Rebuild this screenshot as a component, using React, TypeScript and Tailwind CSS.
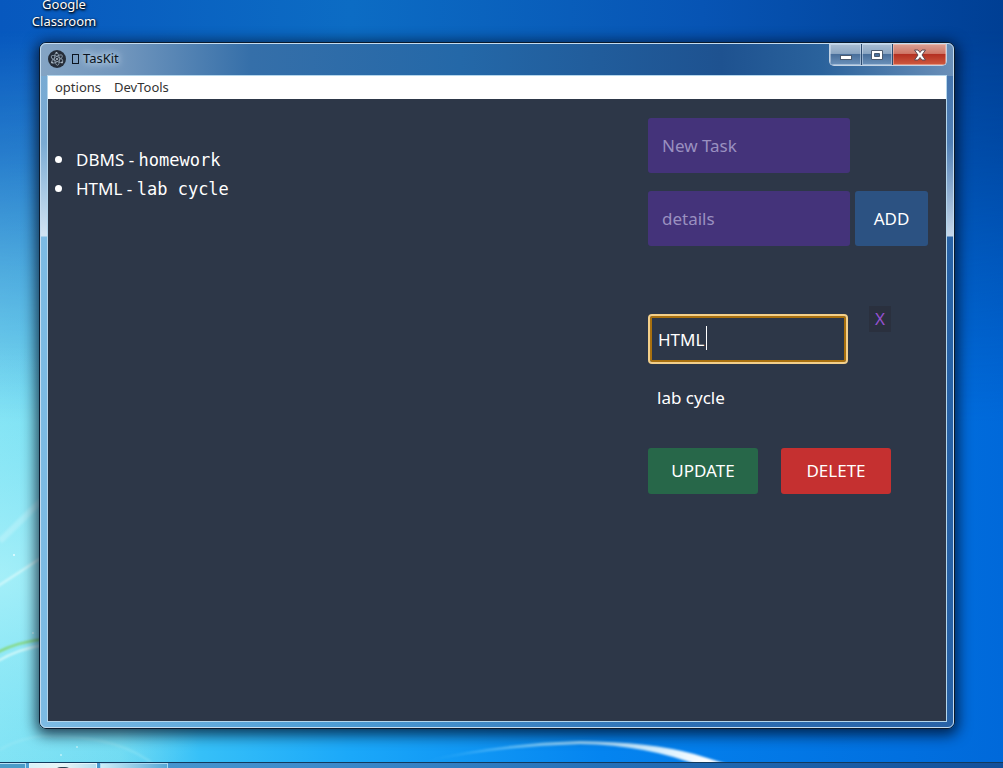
import { useState } from "react";

const tasks = [
  { name: "DBMS", details: "homework" },
  { name: "HTML", details: "lab cycle" },
];

function Wallpaper() {
  return (
    <svg
      className="absolute inset-0 h-full w-full"
      viewBox="0 0 1003 768"
      preserveAspectRatio="none"
      aria-hidden="true"
    >
      <defs>
        <linearGradient id="sky" x1="0" y1="0" x2="1" y2="0">
          <stop offset="0" stopColor="#0758be" />
          <stop offset="0.35" stopColor="#0c6cc4" />
          <stop offset="0.7" stopColor="#0754b4" />
          <stop offset="1" stopColor="#003f94" />
        </linearGradient>
        <linearGradient id="floor" x1="0" y1="0" x2="1" y2="0">
          <stop offset="0" stopColor="#7fe2f4" />
          <stop offset="0.12" stopColor="#6fdaf2" />
          <stop offset="0.2" stopColor="#36c0f8" />
          <stop offset="0.35" stopColor="#1ba8f9" />
          <stop offset="0.6" stopColor="#0484f0" />
          <stop offset="1" stopColor="#0069da" />
        </linearGradient>
        <linearGradient id="fade" x1="0" y1="0" x2="0" y2="1">
          <stop offset="0.04" stopColor="#000" />
          <stop offset="0.2" stopColor="#444" />
          <stop offset="0.35" stopColor="#999" />
          <stop offset="0.55" stopColor="#fff" />
        </linearGradient>
        <mask id="fadeMask">
          <rect width="1003" height="768" fill="url(#fade)" />
        </mask>
        <radialGradient id="glow" cx="0" cy="0.75" r="0.3">
          <stop offset="0" stopColor="#b8f6fb" stopOpacity="0.65" />
          <stop offset="1" stopColor="#8deaf8" stopOpacity="0" />
        </radialGradient>
        <linearGradient id="arc" x1="420" y1="0" x2="740" y2="0" gradientUnits="userSpaceOnUse">
          <stop offset="0" stopColor="#7fd8ff" stopOpacity="0" />
          <stop offset="0.4" stopColor="#a8e2ff" stopOpacity="0.8" />
          <stop offset="0.9" stopColor="#fff" />
          <stop offset="1" stopColor="#fff" stopOpacity="0.8" />
        </linearGradient>
        <filter id="soft" x="-10%" y="-50%" width="120%" height="200%">
          <feGaussianBlur stdDeviation="0.8" />
        </filter>
      </defs>
      <rect width="1003" height="768" fill="url(#sky)" />
      <rect width="1003" height="768" fill="url(#floor)" mask="url(#fadeMask)" />
      <rect width="1003" height="768" fill="url(#glow)" />
      <g fill="none" filter="url(#soft)">
        <path d="M0 541 L42 500" stroke="#fff" strokeOpacity="0.2" strokeWidth="6" />
        <path d="M-2 586 Q20 572 44 556" stroke="#e2fcfc" strokeOpacity="0.85" strokeWidth="2" />
        <path d="M-2 652 Q18 642 44 639" stroke="#84d66c" strokeWidth="2" />
        <path d="M-2 661 Q18 649 44 645" stroke="#d8fafa" strokeWidth="2" />
        <path d="M0 750 Q14 740 42 736 Q120 734 158 768" stroke="#a5ecf6" strokeOpacity="0.4" strokeWidth="2" />
      </g>
      <path
        d="M420 762 Q500 743 580 741 Q650 742 694 754 L740 768 L705 768 Q650 745 580 744 Q500 746 420 762Z"
        fill="url(#arc)"
        filter="url(#soft)"
      />
      <g fill="#e8fdff">
        <circle cx="14" cy="555" r="1" />
        <circle cx="77" cy="747" r="1" opacity="0.6" />
        <circle cx="61" cy="755" r="1" opacity="0.6" />
        <circle cx="33" cy="633" r="1" opacity="0.6" />
      </g>
    </svg>
  );
}

function AppIcon() {
  return (
    <svg className="h-[18px] w-[18px] shrink-0" viewBox="0 0 18 18" aria-hidden="true">
      <circle cx="9" cy="9" r="9" fill="#252d39" />
      <g fill="none" stroke="#8d9cab" strokeWidth="0.9">
        <ellipse cx="9" cy="9" rx="6.3" ry="2.4" transform="rotate(25 9 9)" />
        <ellipse cx="9" cy="9" rx="6.3" ry="2.4" transform="rotate(85 9 9)" />
        <ellipse cx="9" cy="9" rx="6.3" ry="2.4" transform="rotate(145 9 9)" />
      </g>
      <circle cx="9" cy="9" r="1" fill="#b4c0cc" />
      <circle cx="4" cy="12.4" r="0.9" fill="#b4c0cc" />
      <circle cx="14" cy="12.4" r="0.9" fill="#b4c0cc" />
      <circle cx="8.5" cy="2.8" r="0.9" fill="#b4c0cc" />
    </svg>
  );
}

function WindowButtons() {
  const glass =
    "flex items-center justify-center bg-[linear-gradient(to_bottom,#a9bdd3_0%,#8ba6c3_45%,#496f9b_50%,#6b91ba_100%)] shadow-[inset_0_0_0_1px_rgba(215,230,245,0.5)]";
  return (
    <div className="flex h-[22px] overflow-hidden rounded-b-[5px] border border-t-0 border-[#c3d3e4]">
      <button type="button" aria-label="Minimize" className={`${glass} w-8 border-r border-[#2c4b70]`}>
        <svg width="14" height="14" viewBox="0 0 14 14" aria-hidden="true">
          <rect x="1.5" y="7.5" width="11" height="4" fill="#fff" stroke="#4b5b70" />
        </svg>
      </button>
      <button type="button" aria-label="Maximize" className={`${glass} w-[31px] border-r border-[#2c4b70]`}>
        <svg width="14" height="12" viewBox="0 0 14 12" aria-hidden="true">
          <path
            d="M1.5 1.5H12.5V10.5H1.5Z M4.5 4.5V7.5H9.5V4.5Z"
            fill="#fff"
            fillRule="evenodd"
            stroke="#4b5b70"
          />
        </svg>
      </button>
      <button
        type="button"
        aria-label="Close"
        className="flex w-[53px] items-center justify-center bg-[linear-gradient(to_bottom,#dca195_0%,#cf7768_45%,#b43022_50%,#cf5a3f_100%)] shadow-[inset_0_0_0_1px_rgba(255,215,205,0.45)]"
      >
        <svg width="14" height="12" viewBox="0 0 14 12" aria-hidden="true">
          <path
            d="M1.5 1H5L7 3.5L9 1H12.5L9 6L12.5 11H9L7 8.5L5 11H1.5L5 6Z"
            fill="#fff"
            stroke="#5c4750"
          />
        </svg>
      </button>
    </div>
  );
}

function TitleBar() {
  return (
    <header className="flex h-[31px] items-start justify-between">
      <h1 className="flex h-[30px] items-center gap-[6px] pl-[7px] text-[13px] text-[#0b1420] [text-shadow:0_0_6px_#dceaf6,0_0_10px_#c4d9ec]">
        <AppIcon />
        <span className="flex items-center gap-1">
          <span className="h-[10px] w-[7px] border border-[#0b1420]" />
          TasKit
        </span>
      </h1>
      <div className="pr-[6px]">
        <WindowButtons />
      </div>
    </header>
  );
}

function TaskList() {
  return (
    <ul className="flex-1 pt-[46px] pl-[7px] text-[17px] leading-[29px] text-white">
      {tasks.map((task) => (
        <li key={task.name} className="flex h-[29px] items-center">
          <span className="mr-[14px] h-[7px] w-[7px] rounded-full bg-white" />
          <span>
            {task.name} - <code className="font-['DejaVu_Sans_Mono',monospace] text-[17px]">{task.details}</code>
          </span>
        </li>
      ))}
    </ul>
  );
}

function NewTaskForm() {
  const field =
    "block h-[55px] w-[202px] rounded-[3px] bg-[#44337a] px-[14px] text-[17px] text-white placeholder:text-[#9a90c0] outline-none";
  return (
    <form className="flex flex-col gap-[18px]" onSubmit={(e) => e.preventDefault()}>
      <input aria-label="New Task" placeholder="New Task" className={field} />
      <div className="flex items-center gap-[5px]">
        <input aria-label="details" placeholder="details" className={field} />
        <button type="submit" className="h-[55px] w-[73px] rounded-[3px] bg-[#2c5282] text-[17px] text-white">
          ADD
        </button>
      </div>
    </form>
  );
}

function TaskEditor() {
  const [name, setName] = useState("HTML");
  const [details, setDetails] = useState("lab cycle");
  const action = "h-[46px] w-[110px] rounded-[3px] text-[17px] text-white";
  return (
    <form className="mt-[60px]" onSubmit={(e) => e.preventDefault()}>
      <div className="flex items-start gap-[21px]">
        <div className="group relative mt-2">
          <input
            aria-label="Task name"
            value={name}
            onChange={(e) => setName(e.target.value)}
            className="block h-[50px] w-[200px] rounded-[4px] border-2 border-[#f3cf8a] bg-[#2d3748] px-2 text-[17px] text-white shadow-[inset_0_0_0_2px_#a8700f] outline-none"
          />
          <span className="absolute top-3 left-[58px] h-6 w-px bg-white group-focus-within:hidden" />
        </div>
        <button
          type="button"
          aria-label="Close editor"
          className="h-[26px] w-[22px] bg-[#2a303e] text-[17px] text-[#9550d0]"
        >
          X
        </button>
      </div>
      <input
        aria-label="Task details"
        value={details}
        onChange={(e) => setDetails(e.target.value)}
        className="mt-2 block h-[50px] w-[200px] bg-transparent px-[9px] text-[17px] text-white outline-none"
      />
      <div className="mt-[26px] flex gap-[23px]">
        <button type="submit" className={`${action} bg-[#276749]`}>
          UPDATE
        </button>
        <button type="button" className={`${action} bg-[#c53030]`}>
          DELETE
        </button>
      </div>
    </form>
  );
}

function TaskWindow() {
  return (
    <main className="relative mt-[42px] mr-[48px] mb-[33px] ml-[39px] flex flex-1 flex-col rounded-[7px] border border-[#0b1b2e] bg-[linear-gradient(to_bottom,rgba(110,140,180,0.35)_0px,rgba(120,155,195,0.5)_100px,rgba(225,235,245,0.85)_193px,rgba(255,255,255,0)_194px),linear-gradient(to_right,#7dbbe4_0%,#4f9fd6_30%,#2c6fb4_70%,#2862a6_100%)] shadow-[0_3px_14px_3px_rgba(0,10,30,0.75)]">
      <div className="flex flex-1 flex-col rounded-[6px] border border-[#c4dcf0] bg-[linear-gradient(to_right,#84a4c4_0px,#7196bd_80px,#356fa9_210px,#2468a8_420px,#1e5290_680px,#2a629c_780px,#6a8fb8_100%)] bg-[length:100%_32px] bg-no-repeat">
        <TitleBar />
        <div className="mx-[6px] mb-[5px] flex flex-1 flex-col border border-[#b4d6ec] bg-[#2d3748]">
          <nav className="flex h-[23px] items-center gap-[13px] bg-white pl-[7px] text-[13px] text-[#333]">
            <button type="button">options</button>
            <button type="button">DevTools</button>
          </nav>
          <div className="flex flex-1 items-start justify-between">
            <TaskList />
            <section className="w-[298px] pt-[19px]">
              <NewTaskForm />
              <TaskEditor />
            </section>
          </div>
        </div>
      </div>
    </main>
  );
}

function Taskbar() {
  return (
    <footer className="relative flex h-[6px] gap-[3px] overflow-hidden border-t border-[#123a5e] bg-[linear-gradient(to_right,#4f9fd0,#3d8ccc_30%,#2470b8_60%,#12509a)]">
      <span className="h-5 w-[26px] border-t border-r border-[#b6e0f4] bg-[#4a9cc8]" />
      <span className="flex h-5 w-[68px] justify-center border border-[#e4f6fc] bg-[linear-gradient(to_right,#d8f2f8,#e9f4f6,#b5dff0)]">
        <span className="mt-[3px] h-4 w-5 rounded-full bg-[#2b4250]" />
      </span>
      <span className="h-5 w-[68px] border border-[#a8daf2] bg-[linear-gradient(to_right,#cdeef8,#57a8d6)]" />
    </footer>
  );
}

export default function App() {
  return (
    <div className="relative flex min-h-screen flex-col overflow-hidden bg-[#0a66c8] font-['Noto_Sans','Open_Sans',sans-serif]">
      <Wallpaper />
      <a
        href="#classroom"
        className="absolute -top-1 left-6 w-20 text-center text-[13px] leading-[17px] text-white [text-shadow:0_1px_2px_#000,1px_1px_3px_#000]"
      >
        Google Classroom
      </a>
      <TaskWindow />
      <Taskbar />
    </div>
  );
}
